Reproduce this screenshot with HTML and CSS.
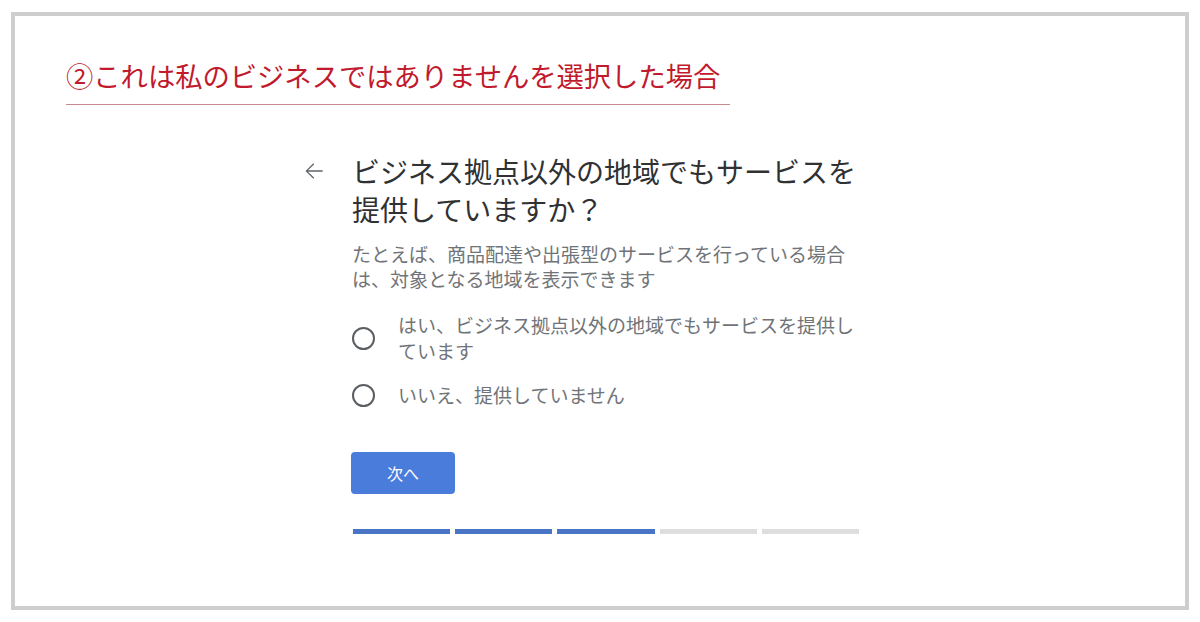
FILE: index.html
```html
<!DOCTYPE html>
<html lang="ja">
<head>
<meta charset="utf-8">
<link rel="stylesheet" href="styles.css">
</head>
<body>
<div class="frame">
  <div class="title">②これは私のビジネスではありませんを選択した場合</div>
  <div class="card">
    <div class="back">
      <svg width="26" height="26" viewBox="0 0 24 24"><path d="M20 11.4H6.5l5.7-5.7-.85-.85L4.2 12l7.15 7.15.85-.85-5.7-5.7H20z" fill="#5f6368"/></svg>
    </div>
    <div class="main">
      <h1 class="heading">ビジネス拠点以外の地域でもサービスを提供していますか？</h1>
      <p class="desc">たとえば、商品配達や出張型のサービスを行っている場合は、対象となる地域を表示できます</p>
      <div class="options">
        <div class="option"><span class="radio"></span><span class="label">はい、ビジネス拠点以外の地域でもサービスを提供しています</span></div>
        <div class="option"><span class="radio"></span><span class="label">いいえ、提供していません</span></div>
      </div>
      <button class="next">次へ</button>
      <div class="progress">
        <span class="seg on"></span><span class="seg on"></span><span class="seg on"></span><span class="seg"></span><span class="seg"></span>
      </div>
    </div>
  </div>
</div>
</body>
</html>
```
FILE: styles.css
```css
html, body { margin: 0; padding: 0; background: #fff; }
body {
  padding: 12px 0 0 11px;
  font-family: "Noto Sans CJK JP", "Noto Sans", sans-serif;
}
.frame {
  width: 1178px;
  height: 598px;
  box-sizing: border-box;
  border: 4px solid #cecece;
  background: #fff;
}
.title {
  margin: 41px 0 0 51px;
  width: 664px;
  font-size: 27.3px;
  line-height: 36px;
  color: #c11a2c;
  padding-bottom: 11px;
  border-bottom: 1.5px solid #c68a8e;
  white-space: nowrap;
}
.card {
  display: flex;
  margin: 47px 0 0 290px;
}
.back {
  width: 47px;
  height: 38px;
  display: flex;
  align-items: center;
  margin-left: -4px;
  margin-right: 4px;
}
.main { width: 508px; }
.heading {
  margin: 0;
  font-size: 28px;
  line-height: 38px;
  font-weight: 400;
  color: #2f3133;
}
.desc {
  margin: 13px 0 0;
  font-size: 19px;
  line-height: 25px;
  color: #707478;
}
.options {
  margin-top: 21px;
  display: flex;
  flex-direction: column;
  gap: 18px;
}
.option {
  display: flex;
  align-items: center;
  gap: 23px;
}
.radio {
  flex: none;
  width: 23px;
  height: 23px;
  box-sizing: border-box;
  border: 2.5px solid #5a5e62;
  border-radius: 50%;
}
.label {
  width: 462px;
  font-size: 19px;
  line-height: 26px;
  color: #707478;
}
.next {
  display: block;
  margin-top: 44px;
  margin-left: -1px;
  width: 104px;
  height: 42px;
  border: none;
  border-radius: 4px;
  background: #4a7cdc;
  color: #fff;
  font-family: inherit;
  font-size: 16px;
}
.progress {
  margin: 35px 0 0 1px;
  width: 506px;
  display: flex;
  gap: 5px;
}
.seg {
  flex: 1;
  height: 5px;
  background: #dedede;
}
.seg.on { background: #4a74c6; }
```
